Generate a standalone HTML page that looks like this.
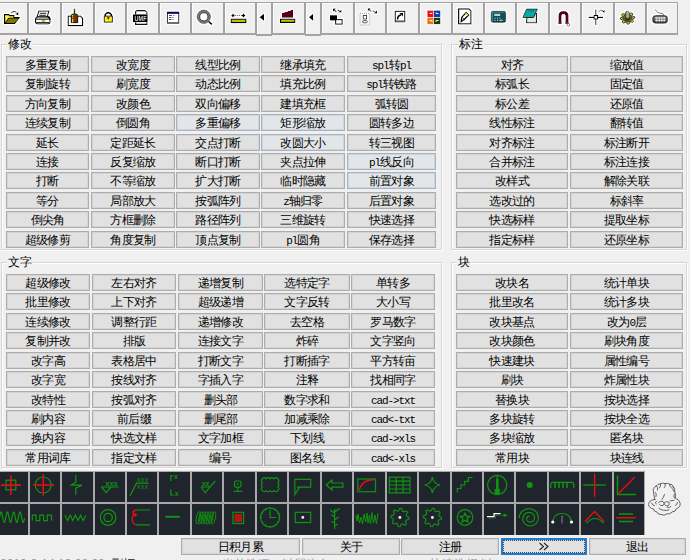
<!DOCTYPE html><html><head><meta charset="utf-8"><style>
*{box-sizing:border-box;margin:0;padding:0}
html,body{width:690px;height:560px;overflow:hidden;background:#f0f0f0;font-family:"Liberation Sans", sans-serif;}
.ab{position:absolute}
.tb{position:absolute;top:2px;height:32px;border:1px solid #a3a3a3;border-width:1px 1px 2px 1px;background:#f0f0f0;box-shadow:inset 1px 1px 0 #fcfcfc}
.tb svg{position:absolute;left:0;top:0}
.btn{position:absolute;height:17px;border:1px solid #adadad;background:#e1e1e1;box-shadow:inset 0 0 0 1px #d4d4d4;font-size:11.5px;letter-spacing:-0.7px;line-height:16px;text-align:center;color:#000;white-space:nowrap;overflow:hidden}
.hov{border-color:#a4b4c6;background:#e3e6e9}
.grp{position:absolute;border:1px solid #d5d5d5;box-shadow:inset 1px 1px 0 #fff,1px 1px 0 #fff}
.lbl{position:absolute;font-size:12px;line-height:14px;color:#000;background:#f0f0f0;padding:0 1px}
.cell{position:absolute;background:#20252d}
.cell svg{position:absolute;left:0;top:0}
.lat{font-family:"Liberation Mono",monospace;font-size:11px;letter-spacing:-1.1px;}
.mono{font-family:"Liberation Mono",monospace;font-size:11px}

</style></head><body>
<div class="tb" style="left:-5px;width:33px;height:33px"></div>
<div class="tb" style="left:28px;width:33px;height:33px"></div>
<div class="tb" style="left:61px;width:33px;height:33px"></div>
<div class="tb" style="left:94px;width:32px;height:33px"></div>
<div class="tb" style="left:126px;width:33px;height:33px"></div>
<div class="tb" style="left:159px;width:32px;height:33px"></div>
<div class="tb" style="left:191px;width:33px;height:33px"></div>
<div class="tb" style="left:224px;width:32px;height:33px"></div>
<div class="tb" style="left:256px;width:16px;height:34px"></div>
<div class="tb" style="left:272px;width:33px;height:33px"></div>
<div class="tb" style="left:305px;width:16px;height:34px"></div>
<div class="tb" style="left:321px;width:33px;height:33px"></div>
<div class="tb" style="left:354px;width:32px;height:33px"></div>
<div class="tb" style="left:386px;width:33px;height:33px"></div>
<div class="tb" style="left:419px;width:33px;height:33px"></div>
<div class="tb" style="left:452px;width:32px;height:33px"></div>
<div class="tb" style="left:484px;width:32px;height:33px"></div>
<div class="tb" style="left:516px;width:33px;height:33px"></div>
<div class="tb" style="left:549px;width:32px;height:33px"></div>
<div class="tb" style="left:581px;width:33px;height:33px"></div>
<div class="tb" style="left:614px;width:32px;height:33px"></div>
<div class="tb" style="left:646px;width:32px;height:33px"></div>
<div class="grp" style="left:1px;top:44px;width:441px;height:206px"></div>
<div class="lbl" style="left:7px;top:37px">修改</div>
<div class="grp" style="left:451px;top:44px;width:236px;height:206px"></div>
<div class="lbl" style="left:458px;top:37px">标注</div>
<div class="grp" style="left:1px;top:262px;width:441px;height:206px"></div>
<div class="lbl" style="left:7px;top:255px">文字</div>
<div class="grp" style="left:451px;top:262px;width:236px;height:206px"></div>
<div class="lbl" style="left:457px;top:255px">块</div>
<div class="btn" style="left:6px;top:56px;width:83px">多重复制</div>
<div class="btn" style="left:91px;top:56px;width:84px">改宽度</div>
<div class="btn" style="left:176px;top:56px;width:84px">线型比例</div>
<div class="btn" style="left:261px;top:56px;width:84px">继承填充</div>
<div class="btn" style="left:347px;top:56px;width:89px"><span class="lat">spl</span>转<span class="lat">pl</span></div>
<div class="btn" style="left:6px;top:75px;width:83px">复制旋转</div>
<div class="btn" style="left:91px;top:75px;width:84px">刷宽度</div>
<div class="btn" style="left:176px;top:75px;width:84px">动态比例</div>
<div class="btn" style="left:261px;top:75px;width:84px">填充比例</div>
<div class="btn" style="left:347px;top:75px;width:89px"><span class="lat">spl</span>转铁路</div>
<div class="btn" style="left:6px;top:95px;width:83px">方向复制</div>
<div class="btn" style="left:91px;top:95px;width:84px">改颜色</div>
<div class="btn" style="left:176px;top:95px;width:84px">双向偏移</div>
<div class="btn" style="left:261px;top:95px;width:84px">建填充框</div>
<div class="btn" style="left:347px;top:95px;width:89px">弧转圆</div>
<div class="btn" style="left:6px;top:114px;width:83px">连续复制</div>
<div class="btn" style="left:91px;top:114px;width:84px">倒圆角</div>
<div class="btn hov" style="left:176px;top:114px;width:84px">多重偏移</div>
<div class="btn hov" style="left:261px;top:114px;width:84px">矩形缩放</div>
<div class="btn" style="left:347px;top:114px;width:89px">圆转多边</div>
<div class="btn" style="left:6px;top:134px;width:83px">延长</div>
<div class="btn" style="left:91px;top:134px;width:84px">定距延长</div>
<div class="btn" style="left:176px;top:134px;width:84px">交点打断</div>
<div class="btn hov" style="left:261px;top:134px;width:84px">改圆大小</div>
<div class="btn" style="left:347px;top:134px;width:89px">转三视图</div>
<div class="btn" style="left:6px;top:153px;width:83px">连接</div>
<div class="btn" style="left:91px;top:153px;width:84px">反复缩放</div>
<div class="btn" style="left:176px;top:153px;width:84px">断口打断</div>
<div class="btn" style="left:261px;top:153px;width:84px">夹点拉伸</div>
<div class="btn hov" style="left:347px;top:153px;width:89px"><span class="lat">pl</span>线反向</div>
<div class="btn" style="left:6px;top:172px;width:83px">打断</div>
<div class="btn" style="left:91px;top:172px;width:84px">不等缩放</div>
<div class="btn" style="left:176px;top:172px;width:84px">扩大打断</div>
<div class="btn" style="left:261px;top:172px;width:84px">临时隐藏</div>
<div class="btn hov" style="left:347px;top:172px;width:89px">前置对象</div>
<div class="btn" style="left:6px;top:192px;width:83px">等分</div>
<div class="btn" style="left:91px;top:192px;width:84px">局部放大</div>
<div class="btn" style="left:176px;top:192px;width:84px">按弧阵列</div>
<div class="btn" style="left:261px;top:192px;width:84px"><span class="lat">z</span>轴归零</div>
<div class="btn" style="left:347px;top:192px;width:89px">后置对象</div>
<div class="btn" style="left:6px;top:211px;width:83px">倒尖角</div>
<div class="btn" style="left:91px;top:211px;width:84px">方框删除</div>
<div class="btn" style="left:176px;top:211px;width:84px">路径阵列</div>
<div class="btn" style="left:261px;top:211px;width:84px">三维旋转</div>
<div class="btn" style="left:347px;top:211px;width:89px">快速选择</div>
<div class="btn" style="left:6px;top:231px;width:83px">超级修剪</div>
<div class="btn" style="left:91px;top:231px;width:84px">角度复制</div>
<div class="btn" style="left:176px;top:231px;width:84px">顶点复制</div>
<div class="btn" style="left:261px;top:231px;width:84px"><span class="lat">pl</span>圆角</div>
<div class="btn" style="left:347px;top:231px;width:89px">保存选择</div>
<div class="btn" style="left:6px;top:274px;width:84px">超级修改</div>
<div class="btn" style="left:92px;top:274px;width:84px">左右对齐</div>
<div class="btn" style="left:178px;top:274px;width:85px">递增复制</div>
<div class="btn" style="left:264px;top:274px;width:86px">选特定字</div>
<div class="btn" style="left:351px;top:274px;width:84px">单转多</div>
<div class="btn" style="left:6px;top:293px;width:84px">批里修改</div>
<div class="btn" style="left:92px;top:293px;width:84px">上下对齐</div>
<div class="btn" style="left:178px;top:293px;width:85px">超级递增</div>
<div class="btn" style="left:264px;top:293px;width:86px">文字反转</div>
<div class="btn" style="left:351px;top:293px;width:84px">大小写</div>
<div class="btn" style="left:6px;top:313px;width:84px">连续修改</div>
<div class="btn" style="left:92px;top:313px;width:84px">调整行距</div>
<div class="btn" style="left:178px;top:313px;width:85px">递增修改</div>
<div class="btn" style="left:264px;top:313px;width:86px">去空格</div>
<div class="btn" style="left:351px;top:313px;width:84px">罗马数字</div>
<div class="btn" style="left:6px;top:332px;width:84px">复制并改</div>
<div class="btn" style="left:92px;top:332px;width:84px">排版</div>
<div class="btn" style="left:178px;top:332px;width:85px">连接文字</div>
<div class="btn" style="left:264px;top:332px;width:86px">炸碎</div>
<div class="btn" style="left:351px;top:332px;width:84px">文字竖向</div>
<div class="btn" style="left:6px;top:352px;width:84px">改字高</div>
<div class="btn" style="left:92px;top:352px;width:84px">表格居中</div>
<div class="btn" style="left:178px;top:352px;width:85px">打断文字</div>
<div class="btn" style="left:264px;top:352px;width:86px">打断插字</div>
<div class="btn" style="left:351px;top:352px;width:84px">平方转亩</div>
<div class="btn" style="left:6px;top:371px;width:84px">改字宽</div>
<div class="btn" style="left:92px;top:371px;width:84px">按线对齐</div>
<div class="btn" style="left:178px;top:371px;width:85px">字插入字</div>
<div class="btn" style="left:264px;top:371px;width:86px">注释</div>
<div class="btn" style="left:351px;top:371px;width:84px">找相同字</div>
<div class="btn" style="left:6px;top:391px;width:84px">改特性</div>
<div class="btn" style="left:92px;top:391px;width:84px">按弧对齐</div>
<div class="btn" style="left:178px;top:391px;width:85px">删头部</div>
<div class="btn" style="left:264px;top:391px;width:86px">数字求和</div>
<div class="btn" style="left:351px;top:391px;width:84px"><span class="lat">cad-&gt;txt</span></div>
<div class="btn" style="left:6px;top:410px;width:84px">刷内容</div>
<div class="btn" style="left:92px;top:410px;width:84px">前后缀</div>
<div class="btn" style="left:178px;top:410px;width:85px">删尾部</div>
<div class="btn" style="left:264px;top:410px;width:86px">加减乘除</div>
<div class="btn" style="left:351px;top:410px;width:84px"><span class="lat">cad&lt;-txt</span></div>
<div class="btn" style="left:6px;top:429px;width:84px">换内容</div>
<div class="btn" style="left:92px;top:429px;width:84px">快选文样</div>
<div class="btn" style="left:178px;top:429px;width:85px">文字加框</div>
<div class="btn" style="left:264px;top:429px;width:86px">下划线</div>
<div class="btn" style="left:351px;top:429px;width:84px"><span class="lat">cad-&gt;xls</span></div>
<div class="btn" style="left:6px;top:449px;width:84px">常用词库</div>
<div class="btn" style="left:92px;top:449px;width:84px">指定文样</div>
<div class="btn" style="left:178px;top:449px;width:85px">编号</div>
<div class="btn" style="left:264px;top:449px;width:86px">图名线</div>
<div class="btn" style="left:351px;top:449px;width:84px"><span class="lat">cad&lt;-xls</span></div>
<div class="btn" style="left:456px;top:56px;width:112px">对齐</div>
<div class="btn" style="left:570px;top:56px;width:113px">缩放值</div>
<div class="btn" style="left:456px;top:75px;width:112px">标弧长</div>
<div class="btn" style="left:570px;top:75px;width:113px">固定值</div>
<div class="btn" style="left:456px;top:95px;width:112px">标公差</div>
<div class="btn" style="left:570px;top:95px;width:113px">还原值</div>
<div class="btn" style="left:456px;top:114px;width:112px">线性标注</div>
<div class="btn" style="left:570px;top:114px;width:113px">翻转值</div>
<div class="btn" style="left:456px;top:134px;width:112px">对齐标注</div>
<div class="btn" style="left:570px;top:134px;width:113px">标注断开</div>
<div class="btn" style="left:456px;top:153px;width:112px">合并标注</div>
<div class="btn" style="left:570px;top:153px;width:113px">标注连接</div>
<div class="btn" style="left:456px;top:172px;width:112px">改样式</div>
<div class="btn" style="left:570px;top:172px;width:113px">解除关联</div>
<div class="btn" style="left:456px;top:192px;width:112px">选改过的</div>
<div class="btn" style="left:570px;top:192px;width:113px">标斜率</div>
<div class="btn" style="left:456px;top:211px;width:112px">快选标样</div>
<div class="btn" style="left:570px;top:211px;width:113px">提取坐标</div>
<div class="btn" style="left:456px;top:231px;width:112px">指定标样</div>
<div class="btn" style="left:570px;top:231px;width:113px">还原坐标</div>
<div class="btn" style="left:456px;top:274px;width:112px">改块名</div>
<div class="btn" style="left:570px;top:274px;width:113px">统计单块</div>
<div class="btn" style="left:456px;top:293px;width:112px">批里改名</div>
<div class="btn" style="left:570px;top:293px;width:113px">统计多块</div>
<div class="btn" style="left:456px;top:313px;width:112px">改块基点</div>
<div class="btn" style="left:570px;top:313px;width:113px">改为<span class="lat">0</span>层</div>
<div class="btn" style="left:456px;top:332px;width:112px">改块颜色</div>
<div class="btn" style="left:570px;top:332px;width:113px">刷块角度</div>
<div class="btn" style="left:456px;top:352px;width:112px">快速建块</div>
<div class="btn" style="left:570px;top:352px;width:113px">属性编号</div>
<div class="btn" style="left:456px;top:371px;width:112px">刷块</div>
<div class="btn" style="left:570px;top:371px;width:113px">炸属性块</div>
<div class="btn" style="left:456px;top:391px;width:112px">替换块</div>
<div class="btn" style="left:570px;top:391px;width:113px">按块选择</div>
<div class="btn" style="left:456px;top:410px;width:112px">多块旋转</div>
<div class="btn" style="left:570px;top:410px;width:113px">按块全选</div>
<div class="btn" style="left:456px;top:429px;width:112px">多块缩放</div>
<div class="btn" style="left:570px;top:429px;width:113px">匿名块</div>
<div class="btn" style="left:456px;top:449px;width:112px">常用块</div>
<div class="btn" style="left:570px;top:449px;width:113px">块连线</div>
<div class="ab" style="left:0;top:471px;width:645px;height:64px;background:#a8a8a8"></div>
<div class="cell" style="left:-3px;top:472px;width:31px;height:30px"></div>
<div class="cell" style="left:30px;top:472px;width:30px;height:30px"></div>
<div class="cell" style="left:62px;top:472px;width:31px;height:30px"></div>
<div class="cell" style="left:95px;top:472px;width:30px;height:30px"></div>
<div class="cell" style="left:127px;top:472px;width:30px;height:30px"></div>
<div class="cell" style="left:159px;top:472px;width:31px;height:30px"></div>
<div class="cell" style="left:192px;top:472px;width:30px;height:30px"></div>
<div class="cell" style="left:224px;top:472px;width:31px;height:30px"></div>
<div class="cell" style="left:257px;top:472px;width:30px;height:30px"></div>
<div class="cell" style="left:289px;top:472px;width:31px;height:30px"></div>
<div class="cell" style="left:322px;top:472px;width:30px;height:30px"></div>
<div class="cell" style="left:354px;top:472px;width:31px;height:30px"></div>
<div class="cell" style="left:387px;top:472px;width:30px;height:30px"></div>
<div class="cell" style="left:419px;top:472px;width:31px;height:30px"></div>
<div class="cell" style="left:452px;top:472px;width:30px;height:30px"></div>
<div class="cell" style="left:484px;top:472px;width:30px;height:30px"></div>
<div class="cell" style="left:516px;top:472px;width:31px;height:30px"></div>
<div class="cell" style="left:549px;top:472px;width:30px;height:30px"></div>
<div class="cell" style="left:581px;top:472px;width:31px;height:30px"></div>
<div class="cell" style="left:614px;top:472px;width:30px;height:30px"></div>
<div class="cell" style="left:-3px;top:504px;width:31px;height:31px"></div>
<div class="cell" style="left:30px;top:504px;width:30px;height:31px"></div>
<div class="cell" style="left:62px;top:504px;width:31px;height:31px"></div>
<div class="cell" style="left:95px;top:504px;width:30px;height:31px"></div>
<div class="cell" style="left:127px;top:504px;width:30px;height:31px"></div>
<div class="cell" style="left:159px;top:504px;width:31px;height:31px"></div>
<div class="cell" style="left:192px;top:504px;width:30px;height:31px"></div>
<div class="cell" style="left:224px;top:504px;width:31px;height:31px"></div>
<div class="cell" style="left:257px;top:504px;width:30px;height:31px"></div>
<div class="cell" style="left:289px;top:504px;width:31px;height:31px"></div>
<div class="cell" style="left:322px;top:504px;width:30px;height:31px"></div>
<div class="cell" style="left:354px;top:504px;width:31px;height:31px"></div>
<div class="cell" style="left:387px;top:504px;width:30px;height:31px"></div>
<div class="cell" style="left:419px;top:504px;width:31px;height:31px"></div>
<div class="cell" style="left:452px;top:504px;width:30px;height:31px"></div>
<div class="cell" style="left:484px;top:504px;width:30px;height:31px"></div>
<div class="cell" style="left:516px;top:504px;width:31px;height:31px"></div>
<div class="cell" style="left:549px;top:504px;width:30px;height:31px"></div>
<div class="cell" style="left:581px;top:504px;width:31px;height:31px"></div>
<div class="cell" style="left:614px;top:504px;width:30px;height:31px"></div>
<div class="btn" style="left:181px;top:538px;width:119px;height:17px;">日积月累</div>
<div class="btn" style="left:302px;top:538px;width:98px;height:17px;">关于</div>
<div class="btn" style="left:401px;top:538px;width:98px;height:17px;">注册</div>
<div class="btn" style="left:501px;top:538px;width:86px;height:17px;border:2px solid #1a7ad6;box-shadow:none;line-height:13px;"><div style="position:absolute;left:0;top:0;right:0;bottom:0;border:1px dotted #444"></div><svg style="position:absolute;left:34px;top:2px" width="14" height="10"><path d="M2.5 1 L6.5 4.5 L2.5 8 M7 1 L11 4.5 L7 8" stroke="#222" stroke-width="1.05" fill="none"/></svg></div>
<div class="btn" style="left:589px;top:538px;width:97px;height:17px;">退出</div>
<div class="ab" style="left:0;top:557px;font-size:12px;line-height:14px;color:#9a9a9a;white-space:nowrap">2019-3-14 13:28:20&nbsp;&nbsp;<span style="color:#222">删框</span></div>
<div class="ab" style="left:222px;top:557px;font-size:12px;line-height:14px;color:#9a9a9a;white-space:nowrap">当前选项：以层改名</div>
<div class="ab" style="left:430px;top:557px;font-size:12px;line-height:14px;color:#9a9a9a;white-space:nowrap">快速选择 以</div>
<svg class="ab" style="left:0;top:0" width="690" height="40" viewBox="0 0 690 40"><defs><filter id="halo" x="-5%" y="-50%" width="110%" height="200%"><feMorphology in="SourceAlpha" operator="dilate" radius="1.1" result="d"/><feGaussianBlur in="d" stdDeviation="0.35" result="db"/><feFlood flood-color="#ffffff"/><feComposite in2="db" operator="in" result="w"/><feMerge><feMergeNode in="w"/><feMergeNode in="SourceGraphic"/></feMerge></filter></defs><g filter="url(#halo)"><path d="M4 14 H9 L10 15 H14.5 V17 H20.5 L15 24 H4 Z" fill="#000"/><path d="M5 15.2 H8.6 L9.6 16.2 H13.4 V17.8 H8.4 L5.3 22.4 Z" fill="#f4f450"/><path d="M8.8 18.6 H18.6 L14.4 23 H5.8 Z" fill="#7a7a00"/><path d="M11.3 13.2 Q13.5 10.2 16.2 12.3" stroke="#000" stroke-width="1.1" fill="none"/><path d="M15.2 13.9 L18.6 11.8 L18.2 15.5 Z" fill="#000"/><path d="M38.8 11 H49 L47.3 16.8 H37 Z" fill="#fff" stroke="#000" stroke-width="1.1"/><path d="M39.8 13.3 H46.3 M39.3 15.3 H45.8" stroke="#000" stroke-width="0.9"/><rect x="35.5" y="17" width="14.6" height="7" rx="2.2" fill="#e8e8e8" stroke="#000" stroke-width="1.1"/><path d="M36 19.2 H49.5 M36.5 22.6 H49" stroke="#000" stroke-width="0.9"/><rect x="36.5" y="20" width="12.5" height="2" fill="#fff"/><rect x="41.8" y="20" width="3.4" height="1.8" fill="#b8b800"/><rect x="38" y="23" width="9" height="0.8" fill="#6a6aa0"/><path d="M46.5 16.2 L49.5 16.8 L50.3 20" stroke="#000" stroke-width="1"/><path d="M68.2 16.2 H80.5 L82.6 18.3 V25.6 H68.2 Z" fill="#fff" stroke="#000" stroke-width="1.2"/><rect x="73.8" y="8.6" width="1.5" height="5" fill="#1a0a0a"/><rect x="73.8" y="8.6" width="0.7" height="2.5" fill="#c08080"/><path d="M71.3 14.6 Q74.5 12.4 77.7 14.6 V22.6 H71.3 Z" fill="#4a4a00" stroke="#000" stroke-width="0.9"/><rect x="72" y="15" width="1.3" height="7.4" fill="#e0e000"/><path d="M72 16.8 H77 M72 18.6 H77" stroke="#d00000" stroke-width="0.8"/><path d="M105.2 16 V14.5 Q108.2 11 111.2 14.5 V16" stroke="#000" stroke-width="1.8" fill="none"/><rect x="104.2" y="16" width="8.2" height="6.2" fill="#f0f020" stroke="#000" stroke-width="1"/><path d="M106.8 17.3 H109.8 L108.3 19.8 Z" fill="#6a0030"/><path d="M135.6 14.2 V11.8 Q135.6 10.6 137 10.6 H145 L147 12.4 V14.2" stroke="#111" stroke-width="1.2" fill="#fff"/><rect x="133" y="14.2" width="14.8" height="8" fill="#000"/><text x="134.6" y="20.8" font-family="Liberation Sans" font-weight="bold" font-size="6.8" fill="#d8d8d8" textLength="12" lengthAdjust="spacingAndGlyphs">UMF</text><path d="M135.6 22.2 V24.4 H147 V22.2" stroke="#111" stroke-width="1.2" fill="#fff"/><rect x="167.4" y="12.2" width="11.4" height="11" fill="#fff" stroke="#000" stroke-width="1"/><rect x="167" y="11.8" width="12.2" height="2" fill="#000066"/><rect x="167" y="22.3" width="12.2" height="1.2" fill="#555"/><path d="M169 15.5 H172 M173.5 15.5 H174.5 M169 17.5 H171.5 M172.5 17.5 H173.5 M169 19.5 H171.5 M172.5 19.5 H173.5" stroke="#444" stroke-width="0.9"/><circle cx="203.8" cy="16.8" r="5.4" fill="#fff" stroke="#7a7a7a" stroke-width="2.6"/><circle cx="203.8" cy="16.8" r="6.7" fill="none" stroke="#333" stroke-width="0.8"/><circle cx="203.8" cy="16.8" r="4.1" fill="none" stroke="#222" stroke-width="0.8"/><path d="M208.5 21.3 L212 24.5" stroke="#000" stroke-width="1.8"/><path d="M233 15.5 H243.5" stroke="#902040" stroke-width="0.9" stroke-dasharray="1.2 0.8"/><path d="M231 15.5 L233 13.5 L235 15.5 L233 17.5 Z M241.5 15.5 L243.5 13.5 L245.5 15.5 L243.5 17.5 Z" fill="#000"/><rect x="231.2" y="19.2" width="14.8" height="3.4" fill="#b8b800" stroke="#000" stroke-width="1.2"/><path d="M232.5 20.9 H245" stroke="#e0e000" stroke-width="0.8" stroke-dasharray="1 1"/><path d="M259.3 17.3 L264 13.6 V21 Z" fill="#000"/><path d="M282 17.8 V12.8 H284 L285 12 H287 L288 11 H290 L291 10 H292 L293 9.2 V17.8 Z" fill="#5a0018"/><rect x="280.5" y="19.2" width="14.3" height="3.2" fill="#b8b800" stroke="#000" stroke-width="1.2"/><path d="M281.8 20.8 H293.6" stroke="#e0e000" stroke-width="0.8" stroke-dasharray="1 1"/><path d="M308.8 17.3 L313.2 13.6 V21 Z" fill="#000"/><rect x="330" y="15.1" width="7" height="5.5" fill="#000"/><rect x="335.6" y="19.6" width="6.6" height="4.6" fill="#fff" stroke="#000" stroke-width="1.1"/><path d="M333 8.6 L336.2 8.6 L333 11.8 Z M341.5 12.6 L341.5 9.4 L338.3 12.6 Z" fill="#000"/><path d="M334 9.6 L336.4 12 M337.6 9.8 L340 11.6" stroke="#000" stroke-width="1.1"/><rect x="360" y="13.3" width="9.8" height="11.8" fill="none" stroke="#3a9ac8" stroke-width="1" stroke-dasharray="1 1"/><rect x="363.2" y="15.5" width="3.4" height="3.6" fill="#fff" stroke="#222" stroke-width="0.9"/><ellipse cx="364.9" cy="21.8" rx="2.6" ry="1.3" fill="#fff" stroke="#222" stroke-width="0.9"/><path d="M367.8 8.2 L371 8.2 L367.8 11.4 Z M377 13.4 L377 10.2 L373.8 13.4 Z" fill="#000"/><path d="M368.8 9.2 L371.2 11.6 M372.6 10.6 L375.4 12.4" stroke="#000" stroke-width="1.1"/><rect x="395.2" y="11.3" width="9.6" height="10.5" fill="#fff" stroke="#111" stroke-width="1.2"/><rect x="396" y="20.4" width="9" height="1.4" fill="#666"/><path d="M397.5 19.5 Q397.5 15.5 401 15" stroke="#000" stroke-width="1.5" fill="none"/><path d="M399.5 13 L403 13 L403 16.5 Z" fill="#000"/><rect x="427.2" y="10.4" width="6.4" height="6.6" fill="#f01010"/><rect x="434" y="10.4" width="6.4" height="6.6" fill="#1040b0"/><rect x="427.2" y="17.6" width="6.4" height="6.6" fill="#f07010"/><rect x="434" y="17.6" width="6.4" height="6.6" fill="#104010"/><path d="M429.5 13.5 H432 V12.5 M436 12.5 V13.5 H438.5 M429.5 20.5 H432 V22 M436 22 V20.5 H438.5" stroke="#fff" stroke-width="0.9" fill="none"/><path d="M458.6 8.8 H469 L471 10.8 V23.8 H458.6 Z" fill="#fff" stroke="#111" stroke-width="1.2"/><path d="M461.2 21.5 L461.8 17.2 L466.2 12.6 L468.6 15 L464.2 19.5 Z" fill="#fff" stroke="#000" stroke-width="1.2"/><path d="M462.5 17.8 L464.8 20" stroke="#000" stroke-width="0.8"/><path d="M465.8 13.2 L468 15.4" stroke="#e8e800" stroke-width="1.3"/><rect x="491.2" y="11.3" width="14.4" height="11" rx="1.5" fill="#10505a" stroke="#000" stroke-width="0.9"/><rect x="491.8" y="12" width="1" height="10" fill="#20a0a0"/><rect x="492" y="11.8" width="13" height="0.8" fill="#20a0a0"/><rect x="494.2" y="13.8" width="6" height="2.2" fill="#c8c8c8"/><path d="M494.5 18.2 H495.5 M497 18.2 H498 M499.5 18.2 H500.5 M494.5 20.3 H495.5 M497 20.3 H498 M499.5 20.3 H502.8" stroke="#ddd" stroke-width="1"/><path d="M527 13.5 H536.5 V22.8 H526.5 Z" fill="#e8e8e8" stroke="#222" stroke-width="1.1"/><path d="M526.5 9 H537.5 L533.5 17.5 H522.8 Z" fill="#10a8a8" stroke="#111" stroke-width="0.9"/><path d="M528.5 11 H534" stroke="#086060" stroke-width="0.8"/><path d="M560 23 V16 Q560 12.5 563.5 12.5 Q567 12.5 567 16 V23" stroke="#5a0014" stroke-width="3.2" fill="none"/><path d="M558.2 23.2 H561.8 M565.2 23.2 H568.8" stroke="#444" stroke-width="1.4"/><circle cx="568.4" cy="24.8" r="1.4" fill="#fff" stroke="#c02040" stroke-width="0.9"/><path d="M588.5 17.3 H603 M595.8 9.5 V25" stroke="#000" stroke-width="1.2"/><rect x="594" y="15.5" width="3.6" height="3.6" fill="#fff" stroke="#000" stroke-width="1.1"/><path d="M598.5 12 Q600 9 603 10.5" stroke="#000" stroke-width="0.9" fill="none"/><path d="M602 11.5 L605 10 L604.5 13 Z" fill="#000"/><path d="M627.50 24.29 L628.94 24.17 L629.64 22.40 L630.61 21.96 L632.73 22.45 L633.65 21.49 L632.67 19.82 L632.99 18.93 L634.90 18.00 L634.76 16.77 L632.67 16.18 L632.16 15.36 L632.73 13.55 L631.61 12.77 L629.64 13.60 L628.59 13.33 L627.50 11.71 L626.06 11.83 L625.36 13.60 L624.39 14.04 L622.27 13.55 L621.35 14.51 L622.33 16.18 L622.01 17.07 L620.10 18.00 L620.24 19.23 L622.33 19.82 L622.84 20.64 L622.27 22.45 L623.39 23.23 L625.36 22.40 L626.41 22.67 Z" fill="#d8d820" stroke="#111" stroke-width="1"/><ellipse cx="627.5" cy="18" rx="4.6" ry="3.8" fill="#6a6a10" stroke="#222" stroke-width="0.8"/><ellipse cx="627.5" cy="18.5" rx="2.6" ry="2.2" fill="#333"/><rect x="626" y="11" width="3.2" height="7.2" rx="1.3" fill="#b0b0b0" stroke="#444" stroke-width="0.6"/><rect x="652.6" y="15.5" width="15" height="7.8" rx="3" fill="#4a4a4a" stroke="#000" stroke-width="0.8"/><rect x="653.8" y="16.6" width="12.5" height="3.2" fill="#777"/><path d="M655 18 H665.5 M655 20.5 H665.5 M656.8 16.8 V21.8 M659.3 16.8 V21.8 M661.8 16.8 V21.8 M664.2 16.8 V21.8" stroke="#fff" stroke-width="0.7"/><path d="M655.5 9.5 Q656.5 13 662 13.5 Q664 13.8 664 15.5" stroke="#111" stroke-width="0.9" fill="none"/></g></svg>
<svg class="ab" style="left:0;top:0" width="690" height="560" viewBox="0 0 690 560"><rect x="6" y="480.2" width="9.8" height="9.6" stroke="#0e960e" stroke-width="1.2" fill="none"/><path d="M1 485.1 H21 M10.9 475.3 V495" stroke="#e01010" stroke-width="1.6" fill="none"/><circle cx="43.2" cy="485" r="8" stroke="#0e960e" stroke-width="1.2" fill="none"/><path d="M33 485 H54 M43.2 474.3 V495.8" stroke="#e01010" stroke-width="1.6" fill="none"/><path d="M75.8 474.8 V482.2 L71.2 485.2 H81.8 L75.8 488.2 V495" stroke="#0e960e" stroke-width="1.2" fill="none"/><path d="M101.2 487 H118.6 M101.5 487 L106.3 492.6 L111 487" stroke="#0e960e" stroke-width="1.2" fill="none"/><text x="111.5" y="486.2" font-family="Liberation Mono" font-weight="bold" font-size="7" fill="#0e960e" text-anchor="middle">xxx</text><path d="M130 495.8 L136.6 483.2 H148.5" stroke="#0e960e" stroke-width="1.2" fill="none"/><text x="142.5" y="482.4" font-family="Liberation Mono" font-size="6.5" fill="#0e960e" text-anchor="middle">xxx</text><text x="142.5" y="489" font-family="Liberation Mono" font-size="6.5" fill="#0e960e" text-anchor="middle">xxx</text><path d="M170.8 481 V475.8 H173.2" stroke="#0e960e" stroke-width="1.2" fill="none"/><path d="M170.8 489.2 V495 H174" stroke="#0e960e" stroke-width="1.2" fill="none"/><text x="176" y="478.8" font-family="Liberation Mono" font-weight="bold" font-size="6.4" fill="#0e960e" text-anchor="middle">x</text><text x="176.6" y="495.6" font-family="Liberation Mono" font-weight="bold" font-size="6.4" fill="#0e960e" text-anchor="middle">x</text><path d="M200.6 487 H210.2 M201.1 487 L205.2 492.8 L209.8 487.2 L215.3 481" stroke="#0e960e" stroke-width="1.2" fill="none"/><text x="205.6" y="486.2" font-family="Liberation Mono" font-weight="bold" font-size="6.4" fill="#0e960e" text-anchor="middle">xx</text><rect x="234.5" y="481" width="6.4" height="6.2" rx="1.5" stroke="#0e960e" stroke-width="1.2" fill="none"/><circle cx="237.7" cy="484" r="1" fill="#0e960e"/><path d="M237.7 487.2 V491.4 M233.6 491.4 H242.3" stroke="#0e960e" stroke-width="1.2" fill="none"/><path d="M262.4 478.8 Q264.32 476.60 266.25 478.8 Q268.18 476.60 270.10 478.8 Q272.02 476.60 273.95 478.8 Q275.88 476.60 277.80 478.8 Q280.00 480.77 277.8 482.73 Q280.00 484.70 277.8 486.67 Q280.00 488.63 277.8 490.60 Q275.88 492.80 273.95 490.6 Q272.02 492.80 270.10 490.6 Q268.18 492.80 266.25 490.6 Q264.32 492.80 262.40 490.6 Q260.20 488.63 262.4 486.67 Q260.20 484.70 262.4 482.73 Q260.20 480.77 262.4 478.80 Z" stroke="#0e960e" stroke-width="1.2" fill="none"/><path d="M297 487.1 H310.7 V479.4 H294.8 V487.1 L295 494.5 L299.5 487.1" stroke="#0e960e" stroke-width="1.2" fill="none"/><path d="M326.2 485 L332 480.1 V483 H342.9 V487.1 H332 V490 Z" stroke="#0e960e" stroke-width="1.2" fill="none"/><rect x="357.8" y="479" width="17.7" height="12.7" stroke="#0e960e" stroke-width="1.2" fill="none"/><path d="M359 490 Q362 483 365.5 481.5 Q369 480 373.5 479.8" stroke="#e01010" stroke-width="1.5" fill="none"/><rect x="389.3" y="477.2" width="20.7" height="15.7" stroke="#0e960e" stroke-width="1.2" fill="none"/><path d="M389.3 481.1 H410 M389.3 485 H410 M389.3 489 H410 M396.2 477.2 V492.9 M403.1 477.2 V492.9" stroke="#0e960e" stroke-width="1.2" fill="none"/><path d="M432.4 477 Q433.5 484 440.2 485 Q433.5 486 432.4 493 Q431.3 486 424.7 485 Q431.3 484 432.4 477 Z" stroke="#0e960e" stroke-width="1.2" fill="none"/><path d="M457.3 492.5 V488.5 H461 V485 H464.7 V481.3 H468.4 V477.5 H472.5" stroke="#0e960e" stroke-width="1.2" fill="none"/><circle cx="497.2" cy="485" r="9.6" stroke="#0e960e" stroke-width="1.2" fill="none"/><path d="M497.2 475.5 V479" stroke="#0e960e" stroke-width="1.2" fill="none"/><rect x="496" y="479" width="2.6" height="10" fill="#0e960e"/><rect x="494.6" y="489" width="5.2" height="5.6" fill="#0e960e"/><circle cx="529.7" cy="485" r="3" fill="#0e960e"/><path d="M550.8 488.2 V484 Q551 482.3 553 482.3 H571.5 Q573.8 482.3 573.8 485 V488.2 M554.8 482.3 V488 M558.8 482.3 V488 M562.8 482.3 V488 M566.8 482.3 V488" stroke="#0e960e" stroke-width="1.2" fill="none"/><path d="M554.8 482.5 Q556.8 484 554.8 488 M558.8 482.5 Q560.8 484 558.8 488 M562.8 482.5 Q564.8 484 562.8 488 M566.8 482.5 Q568.8 484 566.8 488" stroke="#0e960e" stroke-width="0.7" fill="none"/><path d="M583.3 485 H605.8" stroke="#0e960e" stroke-width="1.4"/><path d="M594.6 473.6 V496.8" stroke="#e01010" stroke-width="1.4"/><path d="M617.5 475.5 V494.5 H636" stroke="#0e960e" stroke-width="1.4" fill="none"/><path d="M617.8 494.2 L634.8 477" stroke="#e01010" stroke-width="1.4"/><path d="M-1.00 519.69 L-0.74 518.46 L-0.49 517.15 L-0.23 515.84 L0.02 514.62 L0.27 513.57 L0.53 512.75 L0.78 512.22 L1.04 512.00 L1.29 512.12 L1.55 512.57 L1.81 513.32 L2.06 514.31 L2.31 515.49 L2.57 516.79 L2.83 518.10 L3.08 519.36 L3.33 520.48 L3.59 521.39 L3.84 522.03 L4.10 522.36 L4.36 522.36 L4.61 522.02 L4.87 521.38 L5.12 520.46 L5.38 519.34 L5.63 518.08 L5.88 516.76 L6.14 515.47 L6.39 514.29 L6.65 513.30 L6.91 512.56 L7.16 512.12 L7.41 512.00 L7.67 512.22 L7.93 512.76 L8.18 513.59 L8.44 514.65 L8.69 515.87 L8.95 517.17 L9.20 518.48 L9.46 519.71 L9.71 520.77 L9.96 521.61 L10.22 522.16 L10.47 522.39 L10.73 522.29 L10.98 521.86 L11.24 521.13 L11.49 520.15 L11.75 518.98 L12.01 517.69 L12.26 516.37 L12.52 515.11 L12.77 513.98 L13.03 513.05 L13.28 512.40 L13.54 512.05 L13.79 512.03 L14.04 512.35 L14.30 512.98 L14.55 513.88 L14.81 514.99 L15.07 516.25 L15.32 517.56 L15.57 518.86 L15.83 520.04 L16.09 521.05 L16.34 521.80 L16.59 522.26 L16.85 522.40 L17.11 522.20 L17.36 521.68 L17.61 520.87 L17.87 519.82 L18.12 518.61 L18.38 517.30 L18.64 515.99 L18.89 514.76 L19.14 513.68 L19.40 512.83 L19.66 512.26 L19.91 512.01 L20.16 512.09 L20.42 512.50 L20.68 513.22 L20.93 514.19 L21.18 515.35 L21.44 516.63 L21.70 517.95 L21.95 519.22 L22.20 520.36 L22.46 521.30 L22.71 521.97 L22.97 522.34 L23.23 522.37 L23.48 522.08 L23.73 521.47 L23.99 520.58 L24.25 519.48 L24.50 518.23" stroke="#0e960e" stroke-width="1.2" fill="none"/><path d="M32.3 520.7 V515.2 H36 V520.7 H39.8 V515.2 H43.6 V520.7 H47.3 V515.2 H51.5 V520.7" stroke="#0e960e" stroke-width="1.2" fill="none"/><path d="M65 515.2 L67.6 520.5 L70.2 515.2 L72.8 520.5 L75.4 515.2 L78 520.5 L80.6 515.2 L83.2 520.5 L86 515.2" stroke="#0e960e" stroke-width="1.2" fill="none"/><circle cx="108.1" cy="517.5" r="7.8" stroke="#0e960e" stroke-width="1.2" fill="none"/><circle cx="108.1" cy="517.5" r="4.2" stroke="#0e960e" stroke-width="1.2" fill="none"/><path d="M135.5 510 H150 M135.5 524.8 H150" stroke="#0e960e" stroke-width="1.2" fill="none"/><path d="M135.8 510.2 Q133 510.5 133 513 Q133.2 516 135.8 515.6 Q136.6 514 135 513.8 Q132.2 515.5 132.2 519.5 Q132.4 523.8 135.8 524.6" stroke="#e01010" stroke-width="1.4" fill="none"/><path d="M165.3 516.8 H179.8" stroke="#0e960e" stroke-width="1.9"/><ellipse cx="198.20" cy="517.8" rx="1.9" ry="6.2" transform="rotate(12 198.20 517.8)" stroke="#0e960e" stroke-width="0.9" fill="none"/><ellipse cx="200.75" cy="517.8" rx="1.9" ry="6.2" transform="rotate(12 200.75 517.8)" stroke="#0e960e" stroke-width="0.9" fill="none"/><ellipse cx="203.30" cy="517.8" rx="1.9" ry="6.2" transform="rotate(12 203.30 517.8)" stroke="#0e960e" stroke-width="0.9" fill="none"/><ellipse cx="205.85" cy="517.8" rx="1.9" ry="6.2" transform="rotate(12 205.85 517.8)" stroke="#0e960e" stroke-width="0.9" fill="none"/><ellipse cx="208.40" cy="517.8" rx="1.9" ry="6.2" transform="rotate(12 208.40 517.8)" stroke="#0e960e" stroke-width="0.9" fill="none"/><ellipse cx="210.95" cy="517.8" rx="1.9" ry="6.2" transform="rotate(12 210.95 517.8)" stroke="#0e960e" stroke-width="0.9" fill="none"/><ellipse cx="213.50" cy="517.8" rx="1.9" ry="6.2" transform="rotate(12 213.50 517.8)" stroke="#0e960e" stroke-width="0.9" fill="none"/><rect x="233" y="512.3" width="10.6" height="11.2" stroke="#0e960e" stroke-width="1.2" fill="none"/><rect x="234.5" y="513.8" width="7.6" height="8.2" fill="#b01818"/><circle cx="270.1" cy="517.5" r="9.6" stroke="#0e960e" stroke-width="1.2" fill="none"/><path d="M270.1 510 V517.5 H276" stroke="#0e960e" stroke-width="1.2" fill="none"/><path d="M270.10 509.30 L270.10 507.90 M274.20 510.40 L274.90 509.19 M277.20 513.40 L278.41 512.70 M278.30 517.50 L279.70 517.50 M277.20 521.60 L278.41 522.30 M274.20 524.60 L274.90 525.81 M270.10 525.70 L270.10 527.10 M266.00 524.60 L265.30 525.81 M263.00 521.60 L261.79 522.30 M261.90 517.50 L260.50 517.50 M263.00 513.40 L261.79 512.70 M266.00 510.40 L265.30 509.19" stroke="#0e960e" stroke-width="1.2" fill="none"/><rect x="295.2" y="512.3" width="15.5" height="10.2" stroke="#0e960e" stroke-width="1.2" fill="none"/><circle cx="302.8" cy="517.4" r="1.4" fill="#fff"/><path d="M334.6 529 V509 M334.6 513 L330 510 M334.6 512 L339.5 508.5 M334.6 517 L331 514.5 M334.6 520 L338.5 517 M334.6 523 L331.5 521.5 M334.6 526 L337.5 524" stroke="#0e960e" stroke-width="1.2" fill="none"/><path d="M356 515 L357 521 L358 514 L359.5 523 L361 517 L362.5 524 L364 514 L365.5 522 L367 513 L368 523 L369.5 515 L370.5 524 L372 512.5 L373.5 523 L375 515 L376.5 524 L378 513" stroke="#0e960e" stroke-width="1" fill="none"/><path d="M399.90 508.30 L401.69 508.48 L402.50 511.22 L403.68 511.85 L406.41 510.99 L407.55 512.39 L406.18 514.90 L406.57 516.17 L409.10 517.50 L408.92 519.29 L406.18 520.10 L405.55 521.28 L406.41 524.01 L405.01 525.15 L402.50 523.78 L401.23 524.17 L399.90 526.70 L398.11 526.52 L397.30 523.78 L396.12 523.15 L393.39 524.01 L392.25 522.61 L393.62 520.10 L393.23 518.83 L390.70 517.50 L390.88 515.71 L393.62 514.90 L394.25 513.72 L393.39 510.99 L394.79 509.85 L397.30 511.22 L398.57 510.83 Z" stroke="#0e960e" stroke-width="1.1" fill="none" stroke-linejoin="round"/><circle cx="399.9" cy="517.5" r="1.4" fill="#fff"/><path d="M432.40 508.30 L434.19 508.48 L435.00 511.22 L436.18 511.85 L438.91 510.99 L440.05 512.39 L438.68 514.90 L439.07 516.17 L441.60 517.50 L441.42 519.29 L438.68 520.10 L438.05 521.28 L438.91 524.01 L437.51 525.15 L435.00 523.78 L433.73 524.17 L432.40 526.70 L430.61 526.52 L429.80 523.78 L428.62 523.15 L425.89 524.01 L424.75 522.61 L426.12 520.10 L425.73 518.83 L423.20 517.50 L423.38 515.71 L426.12 514.90 L426.75 513.72 L425.89 510.99 L427.29 509.85 L429.80 511.22 L431.07 510.83 Z" stroke="#0e960e" stroke-width="1.1" fill="none" stroke-linejoin="round"/><circle cx="432.4" cy="517.5" r="1.4" fill="#fff"/><circle cx="465" cy="517.5" r="7.8" stroke="#0e960e" stroke-width="1.2" fill="none"/><path d="M465.00 513.00 L466.29 516.22 L469.76 516.45 L467.09 518.68 L467.94 522.05 L465.00 520.20 L462.06 522.05 L462.91 518.68 L460.24 516.45 L463.71 516.22 Z" stroke="#0e960e" stroke-width="1.2" fill="none"/><path d="M487 516.6 H494 V513.6 H500.5" stroke="#fff" stroke-width="1.2" fill="none"/><path d="M489 518.2 H495.5 V515.2 H506" stroke="#0e960e" stroke-width="1" fill="none" stroke-dasharray="1.5 1"/><path d="M503.5 513.2 L507.8 515.2 L503.5 517.2 Z" fill="#0e960e"/><path d="M519.00 518.20 L519.07 517.47 L519.19 516.75 L519.36 516.04 L519.59 515.35 L519.86 514.68 L520.17 514.03 L520.54 513.41 L520.94 512.81 L521.38 512.25 L521.87 511.73 L522.38 511.24 L522.93 510.79 L523.51 510.38 L524.11 510.01 L524.74 509.69 L525.38 509.41 L526.04 509.18 L526.71 509.00 L527.39 508.86 L528.08 508.77 L528.76 508.73 L529.45 508.74 L530.13 508.80 L530.80 508.90 L531.46 509.04 L532.10 509.24 L532.73 509.47 L533.33 509.75 L533.91 510.07 L534.46 510.42 L534.99 510.81 L535.48 511.23 L535.94 511.69 L536.36 512.17 L536.74 512.68 L537.09 513.21 L537.39 513.77 L537.65 514.33 L537.87 514.92 L538.05 515.51 L538.18 516.11 L538.26 516.72 L538.31 517.33 L538.30 517.93 L538.26 518.53 L538.17 519.13 L538.04 519.71 L537.87 520.28 L537.66 520.83 L537.41 521.37 L537.12 521.88 L536.80 522.37 L536.45 522.84 L536.06 523.27 L535.65 523.68 L535.21 524.05 L534.74 524.39 L534.26 524.70 L533.76 524.97 L533.24 525.20 L532.71 525.40 L532.17 525.56 L531.62 525.67 L531.07 525.75 L530.52 525.80 L529.97 525.80 L529.42 525.76 L528.88 525.69 L528.35 525.58 L527.83 525.43 L527.32 525.25 L526.84 525.04 L526.37 524.79 L525.92 524.51 L525.50 524.21 L525.11 523.88 L524.74 523.52 L524.40 523.14 L524.09 522.74 L523.81 522.32 L523.56 521.89 L523.35 521.44 L523.17 520.99 L523.03 520.52 L522.92 520.05 L522.84 519.57 L522.80 519.09 L522.80 518.62 L522.83 518.15 L522.89 517.68 L522.99 517.23 L523.12 516.78 L523.28 516.35 L523.47 515.93 L523.68 515.53 L523.93 515.14 L524.20 514.78 L524.49 514.44 L524.81 514.13 L525.15 513.83 L525.50 513.57 L525.87 513.33 L526.25 513.12 L526.65 512.94 L527.05 512.78 L527.46 512.66 L527.88 512.57 L528.30 512.50 L528.72 512.47 L529.14 512.47 L529.55 512.49 L529.96 512.54 L530.36 512.62 L530.76 512.73 L531.13 512.87 L531.50 513.03 L531.85 513.21 L532.19 513.41 L532.50 513.64 L532.80 513.89 L533.07 514.15 L533.33 514.43 L533.56 514.73 L533.76 515.04 L533.94 515.36 L534.10 515.68 L534.23 516.02 L534.34 516.36 L534.42 516.71 L534.47 517.05 L534.50 517.40 L534.50 517.75 L534.48 518.09 L534.43 518.42 L534.36 518.75 L534.27 519.07 L534.15 519.38 L534.01 519.68 L533.86 519.97 L533.68 520.24 L533.49 520.49 L533.28 520.73 L533.05 520.95 L532.81 521.16 L532.56 521.34 L532.30 521.51 L532.03 521.65 L531.76 521.77 L531.47 521.88 L531.19 521.96 L530.90 522.02 L530.61 522.06 L530.32 522.08 L530.04 522.07 L529.75 522.05 L529.48 522.01 L529.21 521.95 L528.95 521.87 L528.69 521.78 L528.45 521.67 L528.22 521.54 L528.00 521.40 L527.80 521.24 L527.61 521.08 L527.43 520.90 L527.27 520.71 L527.13 520.51 L527.00 520.31 L526.89 520.10 L526.79 519.88 L526.72 519.67 L526.66 519.45 L526.62 519.23 L526.59 519.01 L526.58 518.79 L526.59 518.57 L526.62 518.36 L526.65 518.15 L526.71 517.95 L526.78 517.76 L526.86 517.58 L526.95 517.40 L527.05 517.23 L527.17 517.08 L527.29 516.93 L527.43 516.80 L527.57 516.68 L527.71 516.57 L527.87 516.47 L528.02 516.39 L528.18 516.32 L528.34 516.26 L528.51 516.22 L528.67 516.18 L528.83 516.16 L528.99 516.16 L529.15 516.16 L529.31 516.18 L529.46 516.20 L529.60 516.24" stroke="#0e960e" stroke-width="1.2" fill="none"/><path d="M552.6 522 Q553.5 513.5 562 513.5 Q570.5 513.5 571.5 522" stroke="#0e960e" stroke-width="1.2" fill="none"/><path d="M562 516 V523.5" stroke="#fff" stroke-width="0.9" stroke-dasharray="0.9 0.9"/><circle cx="552.8" cy="522" r="1.6" fill="#fff"/><circle cx="571.5" cy="522" r="1.6" fill="#fff"/><path d="M586.5 523 Q595 514 603.5 523" stroke="#0e960e" stroke-width="1.2" fill="none"/><path d="M585 521.5 L594.5 511.5 L604 521.5" stroke="#e01010" stroke-width="1.4" fill="none"/><path d="M619 514 H633 M619 521.5 H633" stroke="#0e960e" stroke-width="1.4"/><path d="M616 517.7 H636" stroke="#e01010" stroke-width="1.4"/></svg>
<svg class="ab" style="left:0;top:0" width="690" height="560" viewBox="0 0 690 560"><path d="M654.8 499.5 Q653.6 494 653.2 489.5 Q654 486.5 656.5 486 Q657.5 483.8 660.5 483.8 Q662.5 482.6 665 483.6 Q667.5 482.8 669.5 484.2 Q672.5 484 673.2 486.8 Q675.5 488 674.6 491 Q676 494.5 675.4 498.3 Q679.6 499.5 680.2 503.5 Q680.4 507.5 676.2 508.8 Q675.6 512 672.5 511.8 Q670 514.5 666.5 514 Q664.5 516 661 514.5 Q657.5 514.5 657 512 Q653.5 511.5 653.6 508.9 Q649 508.5 648.6 504.5 Q648.8 500 654.8 499.5 Z" stroke="#4a4a4a" stroke-width="0.85" fill="none" stroke-linecap="round"/><path d="M656.5 486 Q658.5 487.5 657.5 490 M660.5 483.8 Q661 486.5 659.5 488 M665 483.6 Q666 486 664.5 487.5 M669.5 484.2 Q669.5 487 671.5 488 M673.2 486.8 Q672 489.5 673.8 491.5 M655.5 492.5 Q657 494 656 496.5 M674.5 494 Q673 496 674.3 498" stroke="#4a4a4a" stroke-width="0.85" fill="none" stroke-linecap="round"/><path d="M651.5 503 Q652.5 505.5 654.5 505.8 M677.5 502.5 Q677 505 675.5 505.5" stroke="#4a4a4a" stroke-width="0.85" fill="none" stroke-linecap="round"/><path d="M664.5 494.5 Q663.5 497.5 662 499.5 M658.5 502.5 Q660.5 500.5 663 501.5 Q665.5 503.5 663 505.5 Q660.5 506.5 659.5 504.5 M664 503 Q666.5 500.5 668.5 502 Q670.5 504 668 506 Q665.5 506.5 664.5 504.5 M670 501 L674 500.2 M656.5 501 Q654.5 502 656 504" stroke="#4a4a4a" stroke-width="0.85" fill="none" stroke-linecap="round"/><path d="M659 508.5 Q663 511.5 669 510 M667.5 507.5 Q670 508 671 506.5" stroke="#4a4a4a" stroke-width="0.85" fill="none" stroke-linecap="round"/></svg>
</body></html>
